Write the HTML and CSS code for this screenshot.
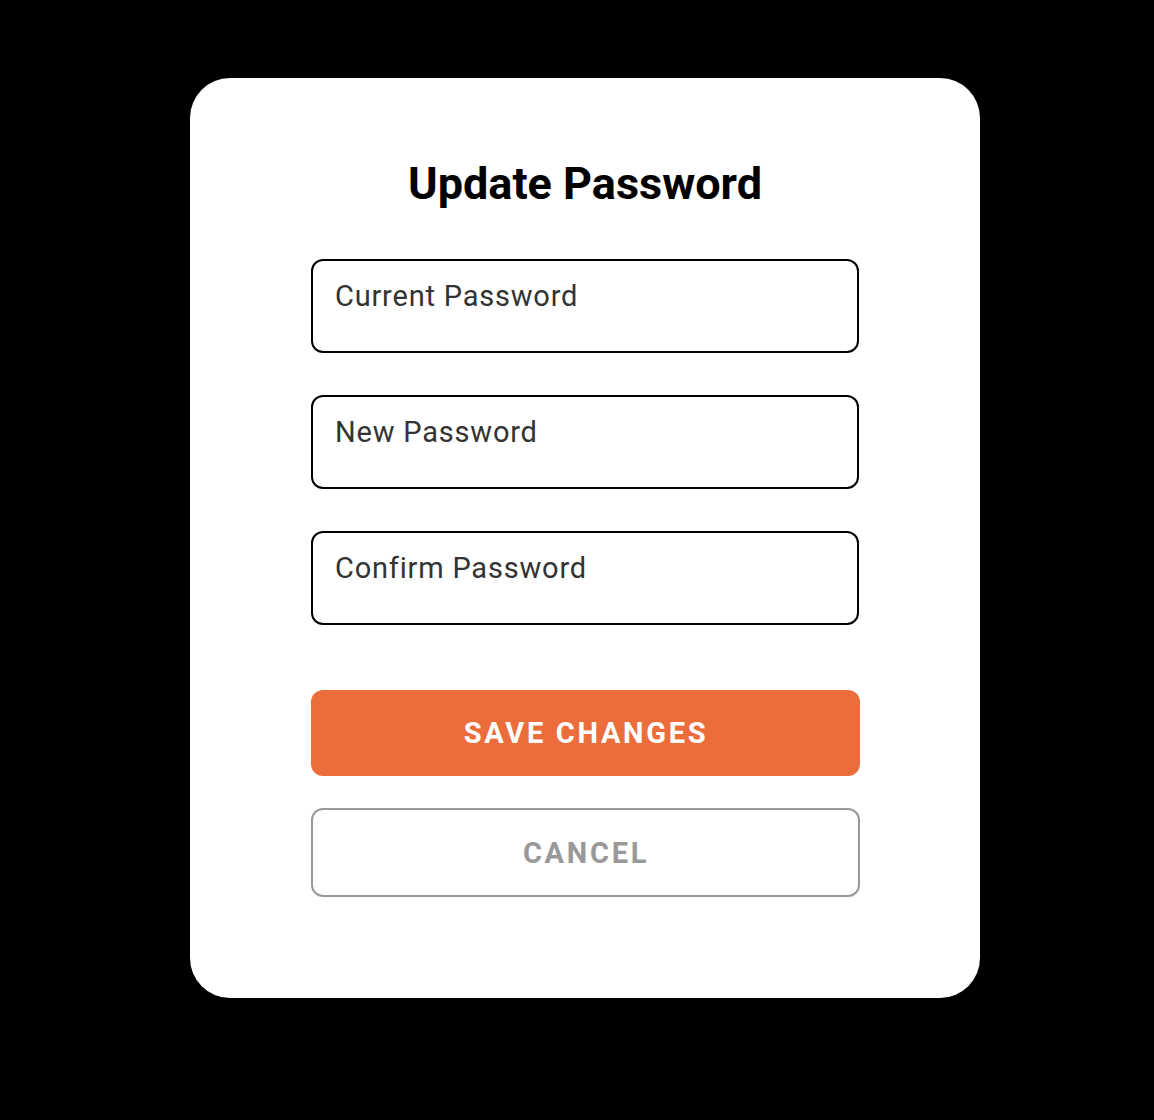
FILE: index.html
```html
<!DOCTYPE html>
<html>
<head>
<meta charset="utf-8">
<link rel="stylesheet" href="styles.css">
</head>
<body>
<div class="page">
  <div class="card">
    <h1 class="title">Update Password</h1>
    <div class="fields">
      <div class="field">Current Password</div>
      <div class="field">New Password</div>
      <div class="field">Confirm Password</div>
    </div>
    <div class="actions">
      <button class="btn btn-save">SAVE CHANGES</button>
      <button class="btn btn-cancel">CANCEL</button>
    </div>
  </div>
</div>
</body>
</html>
```

FILE: styles.css
```css
html, body {
  margin: 0;
  padding: 0;
  background: #000;
  height: 100%;
}
body {
  font-family: Roboto, "Liberation Sans", sans-serif;
}
.page {
  padding-top: 78px;
  padding-left: 190px;
}
.card {
  width: 790px;
  height: 920px;
  box-sizing: border-box;
  background: #fff;
  border-radius: 40px;
  display: flex;
  flex-direction: column;
  align-items: center;
  padding-top: 82px;
}
.title {
  margin: 0;
  font-size: 45px;
  line-height: 48px;
  font-weight: 700;
  color: #000;
  letter-spacing: 0;
}
.fields {
  margin-top: 51px;
  display: flex;
  flex-direction: column;
  gap: 42px;
}
.field {
  width: 548px;
  height: 94px;
  box-sizing: border-box;
  border: 2px solid #000;
  border-radius: 12px;
  padding: 13px 22px 0;
  font-size: 29px;
  line-height: 44px;
  letter-spacing: 0.8px;
  color: #333;
}
.actions {
  margin-top: 65px;
  display: flex;
  flex-direction: column;
  gap: 32px;
}
.btn {
  width: 549px;
  box-sizing: border-box;
  border-radius: 12px;
  font-family: Roboto, "Liberation Sans", sans-serif;
  font-weight: 700;
  font-size: 29px;
  letter-spacing: 2.7px;
  padding: 0 0 0 2px;
  display: flex;
  align-items: center;
  justify-content: center;
}
.btn-save {
  height: 86px;
  background: #ec6d3c;
  border: none;
  color: #fff;
}
.btn-cancel {
  height: 89px;
  background: #fff;
  border: 2px solid #999;
  color: #999;
}
```
